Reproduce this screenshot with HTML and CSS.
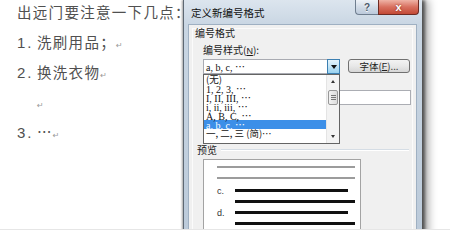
FILE: index.html
```html
<!DOCTYPE html>
<html lang="zh-CN">
<head>
<meta charset="utf-8">
<title>定义新编号格式</title>
<link rel="stylesheet" href="styles.css">
</head>
<body>
<div class="stage">
  <div class="doc">
    <p class="line">出远门要注意一下几点：</p>
    <p class="line"><span class="num">1.</span>洗刷用品；<span class="pm">↵</span></p>
    <p class="line"><span class="num">2.</span>换洗衣物<span class="pm">↵</span></p>
    <p class="line"><span class="num"></span><span class="pm">↵</span></p>
    <p class="line"><span class="num">3.</span>…<span class="pm">↵</span></p>
  </div>
  <div class="window">
    <div class="titlebar">
      <span class="title">定义新编号格式</span>
      <div class="caps">
        <span class="cap-help">?</span>
        <span class="cap-close">x</span>
      </div>
    </div>
    <div class="client">
      <div class="panel">
        <div class="sec-label">编号格式</div>
        <div class="field-label">编号样式(<u>N</u>):</div>
        <div class="combo-row">
          <div class="combo">
            <span class="combo-text">a, b, c, <span class="ell">…</span></span>
            <span class="drop-btn"><span class="tri-down"></span></span>
            <div class="listbox">
              <div class="items">
                <div class="item"><span class="cjk">(无)</span></div>
                <div class="item">1, 2, 3, <span class="ell">…</span></div>
                <div class="item">I, II, III, <span class="ell">…</span></div>
                <div class="item">i, ii, iii, <span class="ell">…</span></div>
                <div class="item">A, B, C, <span class="ell">…</span></div>
                <div class="item selected">a, b, c, <span class="ell">…</span></div>
                <div class="item"><span class="cjk">一, 二, 三 (简)…</span></div>
              </div>
              <div class="sb">
                <span class="sb-btn"><span class="tri-up"></span></span>
                <span class="sb-thumb"><span class="grip"></span></span>
                <span class="sb-space"></span>
                <span class="sb-btn"><span class="tri-down small"></span></span>
              </div>
            </div>
          </div>
          <span class="btn">字体(<u>F</u>)...</span>
        </div>
        <div class="textfield"></div>
        <div class="group-row">
          <span class="group-label">预览</span>
          <span class="group-line"></span>
        </div>
        <div class="preview">
          <div class="gl first"></div>
          <div class="gl second"></div>
          <div class="prow"><span class="plabel">c.</span><span class="pbar"></span></div>
          <div class="bl"></div>
          <div class="prow"><span class="plabel">d.</span><span class="pbar"></span></div>
          <div class="bl"></div>
          <div class="prow"><span class="plabel">e.</span><span class="pbar"></span></div>
        </div>
      </div>
    </div>
  </div>
</div>
</body>
</html>
```
FILE: styles.css
```css
html, body {
  margin: 0;
  padding: 0;
  background: #fff;
}

.stage {
  display: flex;
  height: 229px;
  border-bottom: 1px solid #e6e6e6;
  overflow: hidden;
  background: #fff;
}

/* ---------- document ---------- */
.doc {
  flex: none;
  width: 183px;
  box-sizing: border-box;
  padding-left: 17px;
  margin-top: -3px;
  font-family: "Noto Sans CJK SC", sans-serif;
  font-size: 14.5px;
  letter-spacing: 1.3px;
  color: #505050;
}

.line {
  margin: 0;
  height: 30px;
  line-height: 30px;
  white-space: nowrap;
}

.num {
  display: inline-block;
  width: 20px;
  font-family: "Liberation Sans", sans-serif;
  font-size: 15px;
  letter-spacing: 2px;
}

.pm {
  font-family: "DejaVu Sans", sans-serif;
  font-size: 8px;
  letter-spacing: 0;
  color: #999;
}

/* ---------- window ---------- */
.window {
  flex: none;
  width: 239px;
  height: 280px;
  box-sizing: border-box;
  display: flex;
  flex-direction: column;
  padding: 0 6px 0 5px;
  border-left: 1px solid #5d6873;
  background: linear-gradient(to bottom, #dce5ee 0, #c9d6e3 25px, #b9c8d8 100%);
  box-shadow: 3px 0 3px rgba(0, 0, 0, 0.55), 7px 0 8px rgba(0, 0, 0, 0.3), -1px 0 2px rgba(0, 0, 0, 0.35);
}

.titlebar {
  flex: none;
  height: 25px;
  display: flex;
  align-items: flex-start;
}

.title {
  margin: 7px 0 0 2px;
  font-family: "Noto Sans CJK SC", sans-serif;
  font-size: 10.5px;
  line-height: 12px;
  color: #111;
}

.caps {
  margin-left: auto;
  margin-right: -3px;
  display: flex;
}

.cap-help,
.cap-close {
  height: 15px;
  box-sizing: border-box;
  display: flex;
  align-items: center;
  justify-content: center;
  font-family: "Liberation Sans", sans-serif;
  font-weight: bold;
  font-size: 10px;
}

.cap-help {
  width: 23px;
  border: 1px solid #6f7e8f;
  border-top: none;
  border-right: none;
  border-radius: 0 0 0 4px;
  background: linear-gradient(to bottom, #eef2f7, #cfd9e5 55%, #bccadb);
  color: #4a5869;
  text-shadow: 0 1px 0 #fff;
}

.cap-close {
  width: 41px;
  border: 1px solid #6e2b23;
  border-top: none;
  border-radius: 0 0 4px 0;
  background: linear-gradient(to bottom, #efb3a6, #d8705f 50%, #c34a36);
  color: #fff;
  font-size: 11px;
  text-shadow: 0 0 2px #7a2015;
}

.client {
  flex: 1;
  padding: 3px;
  background: #f0f0f0;
  box-shadow: 0 0 0 1px #9fb0c2;
}

.panel {
  height: 100%;
  box-sizing: border-box;
  padding-left: 2px;
  border: 1px solid #fbfbfb;
  border-bottom: none;
  font-family: "Noto Sans CJK SC", sans-serif;
  font-size: 10px;
  color: #1a1a1a;
}

.panel u {
  font-family: "Liberation Sans", sans-serif;
  font-size: 9px;
}

.sec-label {
  margin-top: -1px;
  line-height: 10px;
}

.field-label {
  margin: 6px 0 0 8px;
  line-height: 11px;
}

.combo-row {
  margin: 2px 0 0 8px;
  display: flex;
  align-items: flex-start;
}

.combo {
  position: relative;
  width: 137px;
  height: 15px;
  box-sizing: border-box;
  border: 1px solid #a9abb2;
  background: #fff;
  display: flex;
}

.combo-text {
  flex: 1;
  padding-left: 2px;
  font-family: "Liberation Serif", "Noto Sans CJK SC", serif;
  font-size: 10px;
  line-height: 13px;
  color: #111;
}

.ell {
  font-family: "Noto Sans CJK SC", sans-serif;
}

.drop-btn {
  width: 13px;
  margin: -1px -1px -1px 0;
  box-sizing: border-box;
  border: 1px solid #3c7fb1;
  background: linear-gradient(to bottom, #e5f4fc, #c4e5f6 50%, #98d1ef);
  display: flex;
  align-items: center;
  justify-content: center;
}

.tri-down {
  width: 0;
  height: 0;
  border-left: 3px solid transparent;
  border-right: 3px solid transparent;
  border-top: 4px solid #111;
}

.tri-down.small {
  border-left-width: 2.5px;
  border-right-width: 2.5px;
  border-top: 3px solid #333;
}

.tri-up {
  width: 0;
  height: 0;
  border-left: 2.5px solid transparent;
  border-right: 2.5px solid transparent;
  border-bottom: 3px solid #333;
}

.listbox {
  position: absolute;
  top: 14px;
  left: -1px;
  width: 137px;
  height: 70px;
  box-sizing: border-box;
  border: 1px solid #646464;
  background: #fff;
  display: flex;
  z-index: 2;
}

.items {
  flex: 1;
  font-family: "Liberation Serif", "Noto Sans CJK SC", serif;
  font-size: 10px;
  color: #111;
}

.item {
  height: 9px;
  line-height: 9px;
  padding-left: 2px;
  white-space: nowrap;
}

.item .cjk {
  font-family: "Noto Sans CJK SC", sans-serif;
  font-size: 9.5px;
}

.item.selected {
  background: #3c8fe8;
  color: #fff;
}

.sb {
  width: 12px;
  display: flex;
  flex-direction: column;
  background: #f3f3f3;
  border-left: 1px solid #e4e4e4;
}

.sb-btn {
  height: 13px;
  display: flex;
  align-items: center;
  justify-content: center;
}

.sb-thumb {
  height: 15px;
  margin: 2px 1px 0;
  box-sizing: border-box;
  border: 1px solid #989898;
  border-radius: 2px;
  background: linear-gradient(to right, #f2f2f2, #dcdcdc);
  display: flex;
  align-items: center;
  justify-content: center;
}

.grip {
  width: 5px;
  height: 5px;
  background: repeating-linear-gradient(to bottom, #777 0, #777 1px, transparent 1px, transparent 2px);
}

.sb-space {
  flex: 1;
}

.btn {
  margin-left: 8px;
  width: 62px;
  height: 14px;
  box-sizing: border-box;
  border: 1px solid #707070;
  border-radius: 3px;
  background: linear-gradient(to bottom, #f3f3f3, #e8e8e8 50%, #d6d6d6);
  display: flex;
  align-items: center;
  justify-content: center;
  font-size: 9.5px;
  line-height: 12px;
  color: #222;
}

.textfield {
  margin: 16px 0 0 8px;
  width: 208px;
  height: 15px;
  box-sizing: border-box;
  border: 1px solid #abadb3;
  background: #fff;
}

.group-row {
  margin: 39px 0 0 2px;
  height: 11px;
  display: flex;
  align-items: center;
}

.group-label {
  line-height: 11px;
}

.group-line {
  flex: 1;
  margin: 0 3px 0 4px;
  border-top: 1px solid #d5dde5;
  border-bottom: 1px solid #fff;
}

.preview {
  margin: 4px 0 0 8px;
  width: 158px;
  height: 100px;
  box-sizing: border-box;
  border: 1px solid #a3a3a3;
  background: #fff;
}

.gl {
  margin-left: 13px;
  width: 138px;
  height: 2px;
  background: #9c9c9c;
}

.gl.first {
  margin-top: 6px;
}

.gl.second {
  margin-top: 9px;
}

.prow {
  margin: 4px 0 0 13px;
  height: 11px;
  display: flex;
  align-items: center;
}

.gl.second + .prow {
  margin-top: 6px;
}

.plabel {
  width: 18px;
  font-family: "Liberation Sans", sans-serif;
  font-size: 9px;
  color: #333;
}

.pbar {
  width: 113px;
  height: 3px;
  background: #111;
}

.bl {
  margin: 4px 0 0 31px;
  width: 120px;
  height: 3px;
  background: #111;
}
```
